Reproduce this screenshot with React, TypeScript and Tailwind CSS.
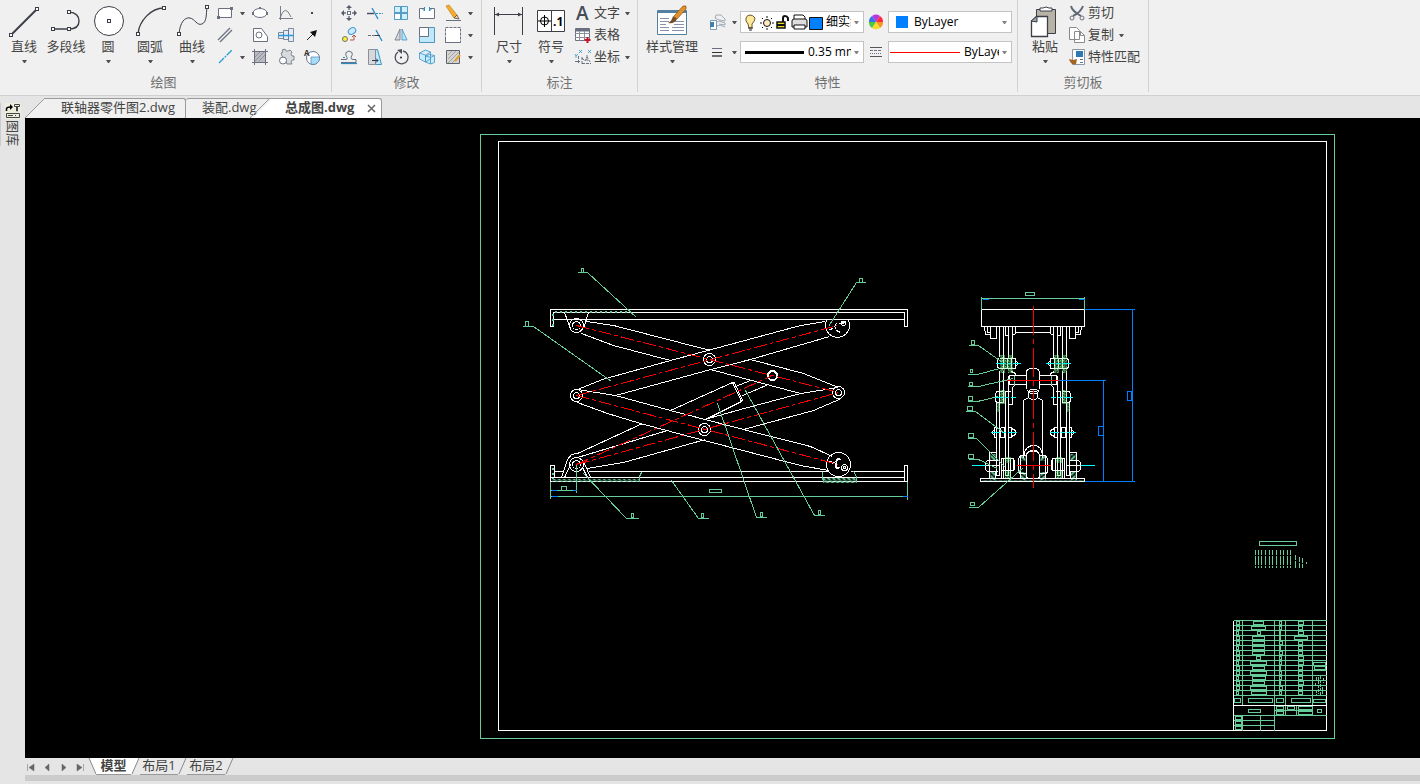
import { ReactNode } from "react";

type Point = [number, number];

const Arrow = ({ className = "" }: { className?: string }) => (
    <svg width="5" height="3" viewBox="0 0 5 3" className={`shrink-0 ${className}`} aria-hidden="true">
        <path d="M0 0h5L3 3H2z" fill="#505050" />
    </svg>
)

const Big = ({ label, icon, arrow = true, wide = false }: { label: string, icon: ReactNode, arrow?: boolean, wide?: boolean }) => (
    <button className={`flex shrink-0 flex-col items-center whitespace-nowrap pt-[2px] ${wide ? "w-[60px]" : "w-[42px]"}`}>
        <svg width="34" height="34" viewBox="0 0 34 34" fill="none" stroke="#3c3f48">{icon}</svg>
        <span className="leading-4">{label}</span>
        {arrow && <Arrow className="mt-[6px]" />}
    </button>
)

const Small = ({ name, narrow = false, children }: { name: string, narrow?: boolean, children: ReactNode }) => (
    <button aria-label={name} className={`flex h-[22px] shrink-0 items-center justify-center ${narrow ? "w-6" : "w-[26px]"}`}>
        <svg width="18" height="18" viewBox="0 0 18 18" fill="none" stroke="#6b7080" className="shrink-0 overflow-visible">{children}</svg>
    </button>
)

const Drop = ({ name }: { name: string }) => (
    <button aria-label={name} className="flex h-[22px] w-[9px] shrink-0 items-center justify-center"><Arrow /></button>
)

const Row = ({ label, icon, arrow }: { label: string, icon: ReactNode, arrow?: boolean }) => (
    <button className="flex h-[22px] items-center whitespace-nowrap">
        <span className="flex w-[22px] justify-center">
            <svg width="18" height="18" viewBox="0 0 18 18" fill="none" stroke="#6b7080" className="overflow-visible">{icon}</svg>
        </span>
        <span className="pb-[2px] leading-[18px]">{label}</span>
        {arrow && <Arrow className="ml-[5px]" />}
    </button>
)

const Group = ({ title, width, pad, children }: { title: string, width: string, pad: string, children: ReactNode }) => (
    <section className={`flex h-[92px] shrink-0 flex-col border-r border-[#d2d2d2] pt-[2px] ${width}`}>
        <div className={`flex h-[71px] ${pad}`}>{children}</div>
        <h2 className="text-center leading-[18px] text-[#707070]">{title}</h2>
    </section>
)

const Picker = ({ name, value, before }: { name: string, value: string, before: ReactNode }) => (
    <label className="flex h-[22px] w-[124px] shrink-0 items-center overflow-hidden border border-[#c3c3c3] bg-white text-xs text-black">
        {before}
        <select aria-label={name} className="h-5 min-w-0 flex-1 appearance-none overflow-hidden bg-transparent">
            <option>{value}</option>
        </select>
        <Arrow className="mr-1 ml-[3px] opacity-70" />
    </label>
)

const node = (x: number, y: number) => <rect x={x} y={y} width="3" height="3" fill="#fff" shapeRendering="crispEdges" />

const icons = {
    line: <><path d="M4 31 30 5" strokeWidth="2" />{node(2, 29)}{node(28, 3)}</>,
    polyline: <><path d="M4 25h16q10 0 10-8t-10-9" strokeWidth="1.4" />{node(2, 23)}{node(18, 23)}{node(18, 6)}</>,
    circle: <><circle cx="18" cy="17" r="14.5" fill="#fff" />{node(16, 15)}</>,
    arc: <><path d="M5 30C6 17 18 4 31 4" strokeWidth="1.4" />{node(3, 28)}{node(29, 2)}</>,
    curve: <><path d="M4 30C5 18 10 13 15 14s7 8 12 6 4-10 5-17" />{node(2, 28)}{node(30, 1)}</>,
    size: <><path d="M2.500 3v28M30.500 3v28M3 10.500h27" /><path d="m3 10.500 4-2v4zM30 10.500l-4-2v4z" fill="#3c3f48" stroke="none" /></>,
    symbol: <>
        <path d="M3.500 6.500h27v21h-27zM17.500 6.500v21" fill="#fff" />
        <circle cx="10.500" cy="17" r="4" stroke="#000" /><path d="M4 17h13M10.500 11v12" stroke="#000" />
        <text x="19" y="22" fontSize="12" fontWeight="700" fill="#000" stroke="none">.1</text>
    </>,
    style: <>
        <path d="M2.500 6.500h29v24h-29z" fill="#fff" stroke="#557f9e" />
        <path d="M2 8h30" strokeWidth="2" stroke="#557f9e" />
        <path d="M5 14.500h9M5 17.500h9M5 20.500h6M5 23.500h9M5 26.500h9M17 17.500h12M19 20.500h10M17 23.500h12M17 26.500h12" stroke="#8793ac" />
        <path d="m19 12 9-10h3v3l-9 10z" fill="#e2902c" stroke="#8b5318" strokeWidth=".7" />
        <path d="m18 12 4 3q-2 5-9 4 4-2 5-7" fill="#754b25" stroke="none" />
    </>,
    paste: <>
        <path d="M8.500 5.500h19v24h-19z" fill="#b8b2a7" />
        <path d="M12 7h12V4h-3q-3-2-6 0h-3z" fill="#fff" />
        <path d="M8.500 12.500h11v20h-16v-15z" fill="#fff" strokeWidth="1.300" />
        <path d="m3 17 6-5v6z" fill="#98a2ad" />
    </>,
}

const modify: [string, ReactNode][][] = [
    [
        ["移动", <><rect x="7.500" y="7.500" width="3" height="3" fill="#fff" /><path d="M9 3v3M9 12v3M3 9h3M12 9h3" strokeWidth="1.500" /><path d="m9 1 3 3H6zM9 17l3-3H6zM1 9l3-3v6zM17 9l-3-3v6z" fill="#555b69" stroke="none" /></>],
        ["修剪", <><path d="M1 9.500h7" stroke="#4c5160" strokeWidth="1.500" /><path d="M10 9.500h7" strokeDasharray="2 1" stroke="#2d8dbb" /><path d="m6 4 6 11" stroke="#2489ca" strokeWidth="1.300" /></>],
        ["阵列", <><path d="M2.500 2.500h13v13h-13z" fill="#d1f0fd" stroke="#569dc6" /><path d="M2.500 9.500h6v6h-6z" fill="#fff" stroke="#569dc6" /><path d="M9 2v14M2 9h14" stroke="#569dc6" strokeWidth="2" /></>],
        ["打断", <><path d="M6 4.500H1.500v10h15v-10H12" fill="#fff" /><path d="M6.500 3v4l-2-2M11.500 3v4l2-2" stroke="#318ec5" /></>],
        ["删除", <><path d="m2 2 3-1 8 10-3 3z" fill="#f6ad28" stroke="#c17b26" strokeWidth=".7" /><path d="m10 14 3-3 2 4z" fill="#efd2b5" stroke="#5a4a3a" strokeWidth=".8" /><path d="M2 16.500h15" /></>],
    ],
    [
        ["复制", <><ellipse cx="12" cy="5" rx="4" ry="3" transform="rotate(-35 12 5)" fill="#cfeafe" stroke="#3a94cd" /><circle cx="5" cy="13" r="2.500" fill="#fff321" /><path d="M10 14h4v-4m-2 1 2-2 2 2" stroke="#ba5445" /></>],
        ["延伸", <><path d="M2 9.500h8" strokeDasharray="3 1" /><path d="m10 4 6 11" stroke="#2489ca" strokeWidth="1.300" /><path d="M9 9.500h5" stroke="#3c3f48" /></>],
        ["镜像", <><path d="m8 3-5 11h5z" fill="#d5d8dc" strokeWidth=".8" /><path d="m10 3 5 11h-5z" fill="#bce7fb" stroke="#3990be" strokeWidth=".8" /></>],
        ["缩放", <><path d="M1.500 1.500h15v15h-15z" fill="#bee8fb" stroke="#5594b8" /><path d="M1.500 1.500h9v9h-9z" fill="#fff" /></>],
        ["拉伸", <><path d="M1.500 1.500h15v15h-15z" fill="#fff" strokeDasharray="3 1" /><path d="M16.500 16.500h-15v-5" /></>],
    ],
    [
        ["偏移", <><path d="M1 11.500h5q2 0 1-2-2-3-1-5 3-3 6 0 1 2-1 5 0 2 2 2h3v3H1" stroke="#657080" /><path d="M1 15.500h16" stroke="#3189c2" strokeWidth="1.200" /><path d="M3 9.500h2" stroke="#3189c2" /></>],
        ["拉长", <><path d="M3.500 1.500h8l4 15h-12z" fill="#bee8fb" stroke="#4096c3" /><path d="M2.500 1.500h7v15h-7z" fill="#d7d8db" stroke="#8a8f99" /><path d="M6 12.500h6m-2-2 2 2-2 2" stroke="#303c4e" /></>],
        ["旋转", <><path d="M11 3a6.500 6.500 0 1 1-5 1" strokeWidth="1.300" stroke="#4a4e59" /><path d="m5 2 5-1v5z" fill="#4a4e59" stroke="none" /><circle cx="9" cy="9.500" r="1" fill="#222" stroke="none" /></>],
        ["三维", <><path d="m1.500 5 6-3 5 2v7l-5 3-6-3zM1.500 5l6 2 5-3M7.500 7v7M7.500 8l4-1.500 5 1v7l-4 1.500-5-2zM7.500 8l5 1.500 4-2M12.500 9.500V16" fill="#c9ecfd" stroke="#3d94c6" strokeWidth=".8" /></>],
        ["编辑填充", <><path d="M2.500 2.500h13v13h-13z" fill="#d4d4d4" stroke="#5e626b" /><path d="m4 7 4-4M4 11l8-8M4 15 15 4M8 15l7-7" stroke="#8f8f8f" strokeWidth=".7" /><path d="m11 13 5-6" stroke="#dfa02f" strokeWidth="2" /></>],
    ],
]

const draw: [string, ReactNode][][] = [
    [
        ["矩形", <><path d="M2.500 4.500h13v9h-13z" fill="#fff" /><path d="M1 12h3v3H1zM14 3h3v3h-3z" fill="#6b7080" stroke="none" /></>],
        ["椭圆", <><ellipse cx="9" cy="9" rx="7" ry="4.500" fill="#fff" /><path d="M1 8h2v3H1zM15 8h2v3h-2zM8 3h2v2H8z" fill="#6b7080" stroke="none" /></>],
        ["函数", <><path d="M3.500 2v14M2 14.500h14M3 14Q8-1 14 13" strokeWidth=".9" /></>],
        ["点", <path d="M9 8v2" strokeWidth="2" stroke="#444" />],
    ],
    [
        ["双线", <path d="M2 14 14 2M4 16 16 4" strokeWidth="1.300" />],
        ["面域", <><path d="M2.500 2.500h8l6 8v5h-14z" fill="#fff" /><circle cx="8" cy="9" r="3" /></>],
        ["轴", <><path d="M1.500 6.500h5v6h-5zM6.500 4.500h5v9h-5zM11.500 2.500h5v13h-5z" fill="#deedf8" strokeWidth=".8" /><path d="M1 9.500h16" stroke="#2d99da" strokeWidth="1.500" /></>],
        ["箭头", <><path d="m4 14 7-7" stroke="#222" /><path d="m14 4-2 7-5-5z" fill="#111" stroke="none" /></>],
    ],
    [
        ["中心线", <path d="M3 15 16 2" stroke="#26a0d4" strokeWidth="1.300" strokeDasharray="7 1 2 1" />],
        ["填充", <><path d="M3.500 3.500h11v11h-11z" fill="#b9bbc0" /><path d="M1 3.500h16M1 14.500h16M3.500 1v16M14.500 1v16" /><path d="m4 9 5-5M4 13l9-9M8 13l6-6" stroke="#858892" strokeWidth=".8" /></>],
        ["齿轮", <><path d="M5 8 4 5l2-1-1-2 3-1 1 2h2l2-1 2 2-1 2 1 2h2v4h-2l-1 2 1 2h-5l-1-3z" fill="#d9dadd" strokeWidth=".8" /><circle cx="6" cy="12.500" r="3.500" fill="#fff" /></>],
        ["局部视图", <><circle cx="10" cy="10" r="6.500" fill="#fff" /><path d="M8 9h8.500A6.500 6.500 0 0 1 8 16z" fill="#a9dcf8" stroke="#4d88b4" strokeWidth=".7" /><text x="1" y="8" fontSize="8" fontWeight="700" fill="#333" stroke="none">A</text></>],
    ],
]

const textIcon = <text x="2" y="16" fontSize="19" fontWeight="600" fill="#454b57" stroke="none">A</text>
const tableIcon = <><path d="M1.500 2.500h14v12h-14z" fill="#fff" /><path d="M2 4h13" strokeWidth="3" /><path d="M1 7.500h15M1 11.500h15M5.500 5v10M10.500 5v10" stroke="#8990a0" /><path d="M13.500 11v6M10.500 14h6" stroke="#c51524" strokeWidth="2" /></>
const coordIcon = <><path d="M4.500 8v8M1 13.500h5M8 15.500h9M8 9v7M13 7v6M8 10l3 3 2-4 3 5" strokeDasharray="3 1" /><path d="m5 2 3 3m0-3L5 5m9-3 3 3m0-3-3 3M1 6l1 2 2-2M2 8v2" stroke="#2e91c8" strokeWidth=".8" /></>
const cutIcon = <><path d="M3 2q1 5 10 10M15 2Q13 8 5 12" strokeWidth="2" stroke="#606b78" /><circle cx="4" cy="14" r="2" /><circle cx="14" cy="14" r="2" /></>
const copyIcon = <><path d="M1.500 1.500h7l3 3v9h-10zM6.500 5.500h6l4 4v7h-10z" fill="#fff" stroke="#8a8a8a" /><path d="M12.500 5.500v4h4" stroke="#8a8a8a" /></>
const matchIcon = <><path d="M4.500 1.500h12v15h-12z" fill="#fff" stroke="#8b98a8" /><path d="M8 3h7v6H8z" fill="#2e79b4" stroke="none" /><path d="M12 11.500h3M12 14.500h3" /><path d="m1 11 4 1 4-1-1 5q-5 2-7-5" fill="#a66220" stroke="none" /></>

const RibbonBar = () => (
    <header className="flex h-24 shrink-0 overflow-hidden border-b border-[#d0d0d0] bg-[#f0f0f0]">
        <Group title="绘图" width="w-[332px] pr-1" pad="pl-[3px]">
            <Big label="直线" icon={icons.line} />
            <Big label="多段线" icon={icons.polyline} arrow={false} />
            <Big label="圆" icon={icons.circle} />
            <Big label="圆弧" icon={icons.arc} />
            <Big label="曲线" icon={icons.curve} />
            <div className="-ml-px">
                {draw.map((row, i) => (
                    <div key={i} className="flex">
                        <Small name={row[0][0]}>{row[0][1]}</Small>
                        {i === 1 ? <span className="w-[9px]" /> : <Drop name={`${row[0][0]}选项`} />}
                        {row.slice(1).map(([name, icon]) => <Small key={name} name={name}>{icon}</Small>)}
                    </div>
                ))}
            </div>
        </Group>
        <Group title="修改" width="w-[150px]" pad="pl-1">
            <div>
                {modify.map((row, i) => (
                    <div key={i} className="flex">
                        {row.map(([name, icon]) => <Small key={name} name={name}>{icon}</Small>)}
                        <Drop name={`${row[4][0]}选项`} />
                    </div>
                ))}
            </div>
        </Group>
        <Group title="标注" width="w-[156px]" pad="pl-[6px]">
            <Big label="尺寸" icon={icons.size} />
            <Big label="符号" icon={icons.symbol} />
            <div className="flex flex-col items-start">
                <Row label="文字" icon={textIcon} arrow />
                <Row label="表格" icon={tableIcon} />
                <Row label="坐标" icon={coordIcon} arrow />
            </div>
        </Group>
        <Group title="特性" width="w-[380px]" pad="pl-1">
            <Big label="样式管理" icon={icons.style} wide />
            <div className="ml-[2px] flex flex-col gap-2 pt-[9px]">
                <div className="flex">
                    <Small name="图层">
                        <path d="M2.500 7.500h6v9h-6z" fill="#fff" stroke="#5c86a8" strokeWidth=".8" /><path d="M2 9h4v5H2z" fill="#477fab" stroke="none" />
                        <path d="m7 5 1-3h5l4 4v2l-6-1zM9 9l2-1 6 2v2l-6-1M9 13l3-1 5 2" stroke="#8f99a5" strokeWidth=".8" />
                    </Small>
                    <Drop name="图层选项" />
                    <span className="w-[1px]" />
                    <Picker name="当前图层" value="细实线" before={
                        <svg width="85" height="20" viewBox="0 0 85 20" fill="none" stroke="#111" className="shrink-0">
                            <path d="M7 12q-3-3-2-6 1-3 4-3t5 3q0 3-3 6v4H8z" fill="#ffe89b" stroke="#6c5a2c" /><path d="M7 16h5M8 18h3" stroke="#222" />
                            <circle cx="26" cy="11" r="3.500" fill="#ffe9c2" /><path d="M26 4v2M26 16v2M19 11h2M31 11h2M21 6l1 1M30 15l1 1M31 6l-1 1M22 15l-1 1" />
                            <path d="M36 10h8v6h-8z" fill="#e5d924" strokeWidth="1.500" /><path d="M36 13h8M42 10V6q0-2 2-2t3 2v3" strokeWidth="2" />
                            <path d="M53 8V3h9l2 2v3" fill="#fff" /><path d="M51 9q0-2 2-2h11q2 0 2 2v6H51z" fill="#ddd" /><path d="M53 13h11v4H53z" fill="#fff" />
                            <path d="M68.500 5.500h13v12h-13z" fill="#0080ff" />
                        </svg>
                    } />
                    <Small name="颜色" narrow>
                        <g stroke="none" transform="translate(2 2)">
                            <path d="M7 7 3 1a7 7 0 0 1 8 0z" fill="#b838de" /><path d="m7 7 4-6a7 7 0 0 1 3 6z" fill="#ff2b3e" /><path d="M7 7h7a7 7 0 0 1-3 6z" fill="#f79620" />
                            <path d="m7 7 4 6a7 7 0 0 1-8 0z" fill="#f5dc2c" /><path d="m7 7-4 6a7 7 0 0 1-3-6z" fill="#50c742" /><path d="M7 7H0a7 7 0 0 1 3-6z" fill="#3273e6" />
                        </g>
                    </Small>
                    <Picker name="对象颜色" value="ByLayer" before={<span className="mr-[6px] ml-[7px] h-3 w-3 shrink-0 bg-[#0080ff]" />} />
                </div>
                <div className="flex">
                    <Small name="线宽"><path d="M4 5.500h10" /><path d="M4 9.500h10" stroke="#333" /><path d="M4 13h10" strokeWidth="1.500" stroke="#444" /></Small>
                    <Drop name="线宽选项" />
                    <span className="w-[1px]" />
                    <Picker name="对象线宽" value="0.35 mm" before={<span className="mx-1 h-[3px] w-[59px] shrink-0 bg-black" />} />
                    <Small name="线型" narrow><path d="M3 4.500h12M3 13.500h12" stroke="#555" /><path d="M3 7.500h12" strokeDasharray="3 1" /><path d="M3 10.500h12" strokeDasharray="1 1" /></Small>
                    <Picker name="对象线型" value="ByLayer" before={<span className="mr-1 ml-[1px] h-px w-[70px] shrink-0 bg-[#ff0000]" />} />
                </div>
            </div>
        </Group>
        <Group title="剪切板" width="w-[131px]" pad="pl-[6px]">
            <Big label="粘贴" icon={icons.paste} />
            <div className="flex flex-col items-start">
                <Row label="剪切" icon={cutIcon} />
                <Row label="复制" icon={copyIcon} arrow />
                <Row label="特性匹配" icon={matchIcon} />
            </div>
        </Group>
    </header>
)

const FileTabs = () => (
    <nav className="flex h-[22px] shrink-0 items-end pl-[25px] text-[#444]">
        <svg width="20" height="20" className="shrink-0"><path d="M0 20 20 0v20z" fill="#f0f0f0" /><path d="M0 20 20 0" stroke="#9a9a9a" /></svg>
        <button className="h-5 w-[141px] shrink-0 rounded-tr-[3px] border-t border-r border-[#9a9a9a] bg-[#f0f0f0] pb-[2px] pl-4 text-left leading-[17px] whitespace-nowrap">联轴器零件图2.dwg</button>
        <button className="h-5 w-[84px] shrink-0 rounded-tl-[3px] border-t border-[#9a9a9a] bg-[#f0f0f0] pb-[2px] pl-4 text-left leading-[17px] whitespace-nowrap">装配.dwg</button>
        <svg width="20" height="20" className="relative -ml-5 shrink-0"><path d="M3 20 20 3v17z" fill="#fff" /><path d="M0 20 20 0" stroke="#9a9a9a" /></svg>
        <div className="relative flex h-5 w-[112px] shrink-0 rounded-tr-[3px] border-t border-r border-[#9a9a9a] bg-white">
            <button className="pb-[2px] pl-[15px] leading-[17px] font-bold whitespace-nowrap">总成图.dwg</button>
            <button aria-label="关闭" className="ml-[13px] flex items-center">
                <svg width="9" height="9" viewBox="0 0 9 9"><path d="m1 1 7 7m0-7L1 8" stroke="#666" strokeWidth="1.500" /></svg>
            </button>
        </div>
    </nav>
)

const Lines = ({ points, ...rest }: { points: Point[][], stroke?: string, strokeDasharray?: string }) => (
    <g {...rest}>{points.map((p, i) => <polyline key={i} points={p.join(" ")} />)}</g>
)

const GREEN = "#66cc99"
const BLUE = "#0080ff"

const platform: Point[][] = [
    [[550, 326], [550, 309], [907, 309], [907, 326], [904, 326], [904, 312], [553, 312], [553, 326], [550, 326]],
    [[553, 319], [904, 319]],
    [[564, 312], [570, 328]], [[588, 312], [583, 328]],
    [[550, 481], [550, 465], [554, 465], [554, 477]],
    [[554, 471], [563, 471]], [[588, 471], [827, 471]], [[850, 471], [904, 471]],
    [[550, 477], [904, 477]], [[550, 481], [907, 481], [907, 465], [904, 465], [904, 481]],
]

const arms: Point[][] = [
    [[586, 321], [613, 325], [710, 350]],
    [[581, 333], [613, 345], [670, 360]],
    [[577, 389], [602, 379], [670, 360], [800, 325], [825, 321]],
    [[615, 395], [703, 371], [750, 359], [829, 336]],
    [[750, 359], [803, 373], [838, 387]],
    [[710, 369], [800, 393], [838, 387]],
    [[704, 419], [740, 409], [800, 393]],
    [[841, 398], [813, 410], [743, 429]],
    [[577, 389], [615, 395], [670, 410], [743, 429], [810, 446], [832, 456]],
    [[577, 402], [607, 413], [640, 423], [700, 439], [800, 465], [828, 470]],
    [[667, 430], [577, 457]],
    [[705, 439], [623, 462], [587, 468]],
    // hydraulic cylinder
    [[577, 453], [642, 423]],
    [[670, 410], [732, 382], [741, 401], [707, 418]],
    [[731, 383], [734, 382], [742, 400], [739, 402]],
    [[735, 386], [750, 380]],
    [[742, 395], [768, 384]],
    // lower bracket
    [[561, 477], [567, 459], [571, 454], [577, 453]],
    [[564, 477], [570, 464]],
    [[584, 463], [590, 477]], [[582, 467], [587, 477]],
]

const axes: Point[][] = [
    [[576, 325], [838, 392]],
    [[576, 395], [837, 325]],
    [[576, 395], [838, 464]],
    [[576, 464], [838, 392]],
    [[576, 464], [772, 375]],
]

const pins = [
    [576, 325, 7], [709, 359, 6], [576, 395, 6], [838, 392, 6], [704, 429, 6], [576, 464, 7],
]

const leaders: Point[][] = [
    [[577, 272], [587, 272], [636, 317]],
    [[522, 326], [533, 326], [611, 381]],
    [[865, 282], [856, 282], [828, 326]],
    [[638, 518], [626, 518], [583, 473]],
    [[708, 518], [698, 518], [671, 480]],
    [[766, 517], [756, 517], [717, 403]],
    [[824, 515], [814, 515], [745, 390]],
    [[968, 345], [978, 345], [1002, 362]],
    [[967, 374], [977, 374], [999, 368]],
    [[967, 386], [978, 386], [1013, 378]],
    [[967, 401], [977, 401], [998, 396]],
    [[965, 411], [975, 411], [1003, 432]],
    [[967, 438], [976, 438], [1005, 467]],
    [[968, 459], [978, 459], [997, 468]],
    [[968, 507], [978, 507], [1023, 467]],
]

const marks = [
    [581, 268, 2, 4], [525, 321, 3, 5], [859, 278, 3, 4], [631, 513, 2, 4], [701, 513, 2, 4], [760, 512, 2, 4], [818, 510, 2, 4],
    [971, 340, 3, 4], [970, 369, 2, 3], [969, 382, 3, 3], [968, 396, 4, 4], [967, 406, 5, 4], [968, 433, 5, 4], [968, 454, 5, 4], [970, 502, 4, 3],
    [561, 486, 5, 4], [709, 489, 12, 3], [1025, 292, 9, 3],
]

// left half of the end view, mirrored about x = 1032.5
const half: Point[][] = [
    [[999, 326], [999, 356]], [[1003, 326], [1003, 357]], [[1008, 326], [1008, 357]], [[1012, 326], [1012, 357]],
    [[999, 370], [999, 391]], [[1003, 370], [1003, 391]],
    [[984, 326], [985, 334], [990, 334]],
    [[987, 326], [987, 332], [990, 332]],
    [[990, 326], [990, 338], [996, 338], [996, 326]],
    [[1005, 326], [1005, 335], [1008, 335]], [[1012, 335], [1015, 333], [1015, 326]],
    [[1015, 332], [1032, 332]],
    // upper joint
    [[999, 358], [997, 359], [997, 367], [999, 368], [1011, 368], [1011, 358], [999, 358]],
    [[1003, 358], [1003, 368]], [[1007, 358], [1007, 368]],
    [[1011, 358], [1015, 358], [1015, 368], [1011, 368]], [[1015, 360], [1018, 363], [1015, 366]],
    [[1011, 371], [1015, 373], [1015, 375]], [[1026, 375], [1009, 375], [1009, 384], [1026, 384]],
    [[1015, 384], [1012, 387], [1012, 404], [1008, 404]],
    [[1008, 375], [1008, 475], [1005, 475], [1005, 391], [1010, 391]],
    // middle joint
    [[1003, 391], [996, 391], [995, 394], [995, 401], [997, 402], [1003, 402], [1003, 391]],
    [[996, 402], [996, 475], [999, 475], [999, 391]],
    [[996, 427], [994, 427], [994, 437], [996, 437]], [[994, 429], [991, 432], [994, 435]],
    [[1000, 427], [1004, 427], [1004, 437], [1000, 437], [1000, 427]],
    [[1008, 427], [1011, 427], [1011, 437], [1008, 437]], [[1011, 428], [1015, 430], [1015, 434], [1011, 436]],
    // foot joint
    [[996, 460], [996, 452], [989, 452], [989, 460]], [[989, 471], [989, 478]], [[995, 471], [995, 478]],
    [[997, 460], [987, 460], [985, 462], [985, 469], [987, 471], [997, 471]], [[989, 460], [989, 471]],
    [[1001, 478], [1001, 458], [1013, 458], [1013, 470], [1001, 470]],
    [[1003, 458], [1003, 478]], [[1010, 458], [1010, 478]], [[1013, 460], [1014, 460], [1014, 469], [1013, 469]],
    [[1026, 455], [1020, 455], [1018, 458], [1018, 472], [1020, 473], [1026, 473]],
    [[1020, 455], [1020, 478]], [[1026, 473], [1026, 478]],
]

const center: Point[][] = [
    [[981, 309], [1084, 309], [1084, 326], [981, 326], [981, 309]],
    [[980, 481], [980, 478], [1084, 478], [1084, 481], [980, 481]],
    [[1028, 391], [1030, 389], [1036, 389], [1038, 391], [1036, 393], [1030, 393], [1028, 391]],
    [[1028, 391], [1028, 397], [1023, 400], [1023, 457]],
    [[1037, 391], [1037, 397], [1042, 400], [1042, 457]],
    [[1028, 397], [1031, 399], [1035, 399], [1037, 397]],
]

const ScissorLift = () => (
    <>
        <Lines points={platform} />
        <g stroke={GREEN} strokeWidth="2">
            <path d="M554 311h75M552 313v13" strokeDasharray="2 3" />
            <path d="M552 467v11" strokeDasharray="2 3" />
        </g>
        <g fill="url(#hatch)" stroke="none">
            <rect x="551" y="478" width="88" height="3" />
            <rect x="822" y="477" width="34" height="5" />
        </g>
        <Lines points={arms} />
        {pins.map(([x, y, r], i) => (
            <g key={i}><circle cx={x} cy={y} r={r} /><circle cx={x} cy={y} r={r - 3} /></g>
        ))}
        <circle cx="772" cy="375" r="5" />
        <circle cx="772" cy="375" r="4" />
        <path d="M826 320A12 12 0 1 0 848 320" />
        <circle cx="838" cy="464" r="12" />
        <path d="M829 329l4-1M836 323l-2 3 2 3M836 330l4 2M838 323h5" /><circle cx="843" cy="323" r="2" /><path d="M840 321h5" strokeWidth="2" />
        <path d="M829 461l5 2M835 462l2-3 3-1M835 463l1 4 3 1" strokeWidth="2" /><circle cx="844" cy="467" r="3" /><circle cx="844" cy="467" r="1" />
        <Lines points={axes} stroke="#ff0000" strokeDasharray="13 3 4 3" />
        <g stroke={GREEN}>
            <path d="M550 481v17M576 464v28M550 490h26M550 496h357M907 481v18M641 472l-2 4v5M822 471v7l2 4M853 471l3 5v5" />
        </g>
        <path d="M551 490h5M572 490h4M551 496h6M902 496h5" stroke={BLUE} />
    </>
)

const EndView = () => (
    <>
        <g fill="url(#hatch)" stroke="none">
            <rect x="981" y="479" width="103" height="2" />
        </g>
        {["", "translate(2065 0) scale(-1 1)"].map((t) => (
            <g key={t} transform={t}>
                <g fill="url(#hatch)" stroke="none">
                    <rect x="989" y="453" width="7" height="7" /><rect x="989" y="471" width="6" height="8" />
                    <rect x="1020" y="455" width="6" height="5" /><rect x="1020" y="471" width="6" height="8" />
                </g>
                <Lines points={half} />
                <g fill="url(#bright)" stroke="none">
                    <rect x="999" y="354" width="5" height="18" /><rect x="1007" y="354" width="5" height="18" />
                    <rect x="1004" y="358" width="3" height="10" />
                    <rect x="999" y="389" width="5" height="14" /><rect x="996" y="402" width="3" height="9" />
                    <rect x="1004" y="456" width="6" height="6" /><rect x="1004" y="470" width="6" height="8" />
                </g>
                <path d="M995 363h25M993 397h22M990 432h28" stroke="#00ffff" strokeDasharray="9 2 4 2" />
                <path d="M971 465h14" stroke="#00ffff" />
                <path d="M985 465h14" />
                <path d="M1014 375v9" stroke={GREEN} />
            </g>
        ))}
        <Lines points={center} />
        <rect x="1026" y="368" width="13" height="23" rx="4" />
        <path d="M1023 457q1-12 10-12t9 12M1027 452q6-5 11 0" />
        <rect x="1026" y="451" width="13" height="27" rx="4" />
        <path d="M1033 305v182" stroke="#ff0000" strokeDasharray="29 4 5 4" />
        <path d="M1006 380h52M1016 465h34" stroke="#ff0000" />
        <path d="M981 298h103M981 296v13M1084 296v13" stroke={GREEN} />
        <path d="M982 299h6M1078 299h6M1084 309h50M1132 309v172M1084 481h50M1058 380h47M1103 380v101M1127 391h4v9h-4zM1098 426h5v9h-5z" stroke={BLUE} />
    </>
)

// widths of the cell marks, one entry for each row of the parts list
const nameMarks = [10, 14, 3, 12, 12, 12, 12, 4, 16, 12, 16, 13, 12, 16, 15]
const sourceMarks = [5, 4, 5, 13, 4, 4, 4, 5, 5, 4, 4, 4, 5, 4, 4]
const countMarks = [2, 2, 1, 1, 3, 1, 3, 2, 2, 1, 2, 2, 1, 3, 2]

const TitleBlock = () => (
    <g stroke={GREEN}>
        {nameMarks.map((w, i) => {
            const y = 620 + i * 5
            return (
                <g key={i}>
                    <path d={`M1233 ${y}h93`} />
                    <rect x={1236} y={y + 1} width={i % 3 === 2 ? 2 : 3} height="3" />
                    <rect x={1258 - Math.floor(w / 2)} y={y + 1} width={w} height="3" />
                    <rect x={1279} y={y + 1} width={countMarks[i]} height="3" />
                    <rect x={1300 - Math.floor(sourceMarks[i] / 2)} y={y + 1} width={sourceMarks[i]} height="3" />
                </g>
            )
        })}
        <path d="M1233 695h93M1242 620v85M1274 620v110M1285 620v95M1312 620v95M1274 710h38M1233 715h93M1242 715v15M1260 715v15M1233 720h41M1233 725h41M1296 705v10" />
        <path d="M1234 698h6v4h-6zM1248 698h24v4h-24zM1276 698h7v4h-7zM1291 698h19v4h-19zM1313 699h12v3h-12zM1248 709h12v3h-12zM1317 709h4v3h-4z" />
        <path d="M1276 706h7v3h-7zM1276 711h7v3h-7zM1287 706h7v3h-7zM1298 706h14v3h-14zM1298 711h14v3h-14zM1235 716h6v3h-6zM1235 721h6v3h-6zM1235 726h6v3h-6z" />
        <path d="M1313 662h12v3h-12zM1314 666h11v3h-11z" />
        <path d="M1316 676v3M1320 675v19M1318 676v17M1323 677v5M1315 682v3M1322 686v8M1316 689v5" strokeDasharray="3 1" />
        <path d="M1259 541h37v4h-37z" />
        <path d="M1255 549v18M1258 549v18M1261 549v18M1265 549v18M1269 549v18M1272 549v18M1276 549v18M1280 549v18M1283 549v18M1287 549v18M1290 549v18M1295 554v13M1299 556v11M1302 557v10M1306 561v2" strokeDasharray="5 1 9 1" />
        <path d="M1233 705h93M1233 620v110" stroke="#fff" />
    </g>
)

const Drawing = () => (
    <svg viewBox="25 118 1395 640" className="block min-h-0 flex-1 bg-black" role="img" aria-label="总成图">
        <defs>
            <pattern id="hatch" width="5" height="5" patternUnits="userSpaceOnUse"><path d="M0 0l5 5" stroke={GREEN} strokeWidth="2" /></pattern>
            <pattern id="bright" width="3" height="3" patternUnits="userSpaceOnUse"><path d="M0 0h1v1H0zM1 1h1v1H1zM2 2h1v1H2zM2 0h1v1H2z" fill="#80ff99" /></pattern>
        </defs>
        <g transform="translate(.5 .5)" fill="none" stroke="#fff" shapeRendering="crispEdges">
            <rect x="480" y="134" width="854" height="604" stroke={GREEN} />
            <rect x="498" y="141" width="828" height="589" />
            <ScissorLift />
            <EndView />
            <Lines points={leaders} stroke={GREEN} />
            <g stroke={GREEN}>{marks.map(([x, y, w, h], i) => <rect key={i} x={x} y={y} width={w} height={h} />)}</g>
            <TitleBlock />
        </g>
    </svg>
)

const slant = (fill: string, next: string) => (
    <svg width="9" height="17" viewBox="0 0 9 17" className="shrink-0">
        <path d="M0 0h8L1 16H0z" fill={fill} /><path d="M8 0h1v16H1z" fill={next} /><path d="M8 0 1 16" stroke="#888" />
    </svg>
)

const LayoutTabs = () => (
    <footer className="h-[26px] shrink-0 text-[#444]">
        <div className="flex h-[17px]">
            <div className="-ml-px mr-2 flex items-center">
                {[["首页", "M3.500 6v7M10 6 5 9.500l5 3.500z"], ["上一页", "M9 6 5 9.500 9 13z"], ["下一页", "m6 6 4 3.500L6 13z"], ["末页", "M11.500 6v7M5 6l5 3.500L5 13z"]].map(([name, d]) => (
                    <button key={name} aria-label={name} className="h-[17px] w-4">
                        <svg width="16" height="17" viewBox="0 0 16 17"><path d={d} fill="#666" stroke="#666" strokeWidth=".5" /></svg>
                    </button>
                ))}
            </div>
            <svg width="8" height="17" viewBox="0 0 8 17" className="-ml-2 shrink-0"><path d="M1 0h7v16z" fill="#fff" /><path d="m1 0 7 16" stroke="#888" /></svg>
            <button className="h-[17px] w-[35px] border-b border-[#999] bg-white pb-px font-bold leading-[15px] whitespace-nowrap">模型</button>
            {slant("#fff", "#e9e9e9")}
            <button className="h-[17px] w-[38px] border-b border-[#999] bg-[#e9e9e9] pb-px leading-[15px] whitespace-nowrap">布局1</button>
            {slant("#e9e9e9", "#e9e9e9")}
            <button className="h-[17px] w-[38px] border-b border-[#999] bg-[#e9e9e9] pb-px leading-[15px] whitespace-nowrap">布局2</button>
            {slant("#e9e9e9", "#e5e5e5")}
        </div>
        <div className="h-[6px] bg-[#cbcbcb]" />
    </footer>
)

const App = () => {
    return (
        <div className="flex h-screen flex-col overflow-hidden bg-[#e5e5e5] font-['Open_Sans','Noto_Sans_CJK_SC',sans-serif] text-[13px] text-[#444]">
            <RibbonBar />
            <div className="relative flex min-h-0 flex-1 flex-col">
                <FileTabs />
                <div className="flex min-h-0 flex-1">
                    <aside className="w-[25px] shrink-0">
                        <button className="-mt-[15px] flex w-[24px] flex-col items-center border-l border-[#ccc]">
                            <svg width="16" height="16" viewBox="0 0 16 16" fill="none" stroke="#444" className="mb-px bg-[#eeeedd]">
                                <path d="M1.500 8V6q0-2 4-2" stroke="#000" strokeWidth="1.500" /><path d="m5 1 3 3-3 3z" fill="#000" stroke="none" />
                                <path d="M9.500 1.500h5v2h-5zM11.500 4v4h1V4" /><path d="M1.500 10.500h13v4h-13zM3 12.500h5M10 12.500h1" />
                            </svg>
                            <span className="[writing-mode:vertical-rl] [text-orientation:sideways] leading-4">图库</span>
                        </button>
                    </aside>
                    <main className="flex min-w-0 flex-1 flex-col">
                        <Drawing />
                        <LayoutTabs />
                    </main>
                </div>
            </div>
        </div>
    )
}

export default App;
